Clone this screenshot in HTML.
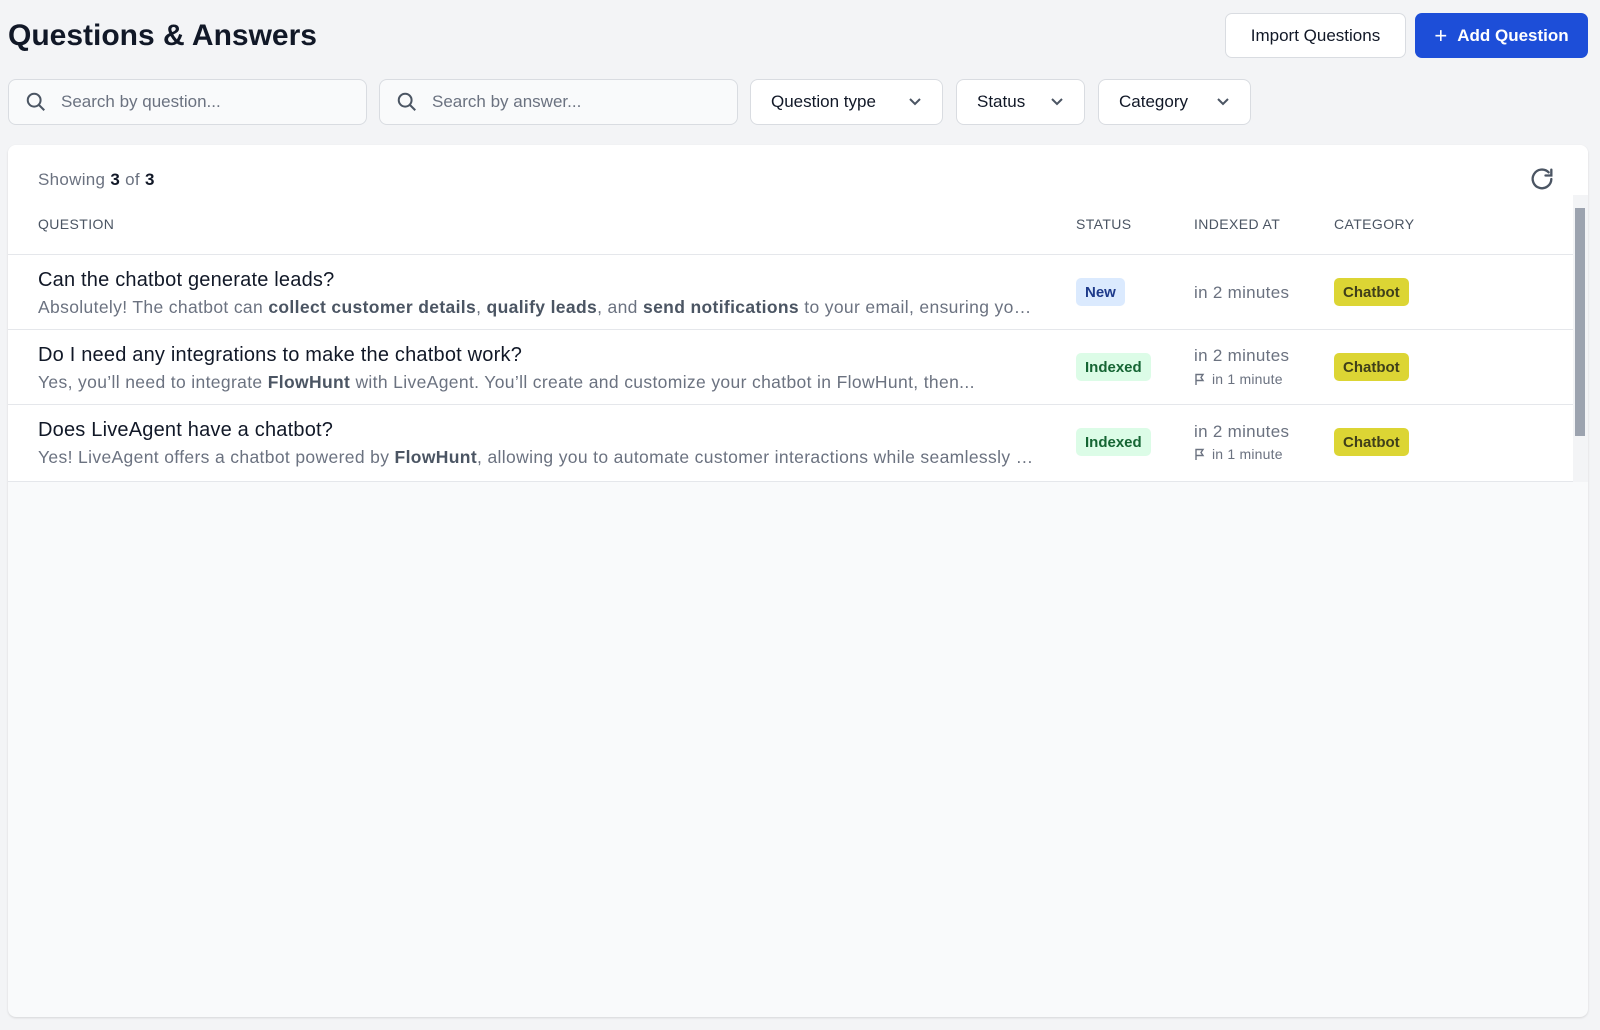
<!DOCTYPE html>
<html><head><meta charset="utf-8"><style>
*{box-sizing:border-box;margin:0;padding:0}
body{width:1600px;height:1030px;background:#f3f4f6;font-family:"Liberation Sans",sans-serif;color:#111827;position:relative;overflow:hidden}
.abs{position:absolute}
h1{position:absolute;left:8px;top:19px;font-size:30px;font-weight:700;color:#111827;letter-spacing:0px}
.btn{position:absolute;top:13px;height:45px;border-radius:7px;font-size:17px;display:flex;align-items:center;justify-content:center}
.inp{position:absolute;top:79px;height:46px;border:1px solid #d9dce1;border-radius:8px;background:#f9fafb;display:flex;align-items:center;font-size:17px;color:#6b7280}
.inp svg{margin:0 14px 0 16px}
.dd{position:absolute;top:79px;height:46px;border:1px solid #d9dce1;border-radius:8px;background:#fff;display:flex;align-items:center;justify-content:space-between;padding:0 20px;font-size:17px;color:#111827}
.card{position:absolute;left:8px;top:145px;width:1580px;height:872px;background:#f9fafb;border-radius:8px;box-shadow:0 1px 2px rgba(0,0,0,.12)}
.top{position:absolute;left:0;top:0;width:1580px;height:337px;background:#fff;border-radius:8px 8px 0 0}
.th{position:absolute;top:71px;font-size:14px;color:#4b5563;letter-spacing:.4px}
.row{position:absolute;left:0;width:1565px;height:75px;border-top:1px solid #e5e7eb}
.q{position:absolute;left:30px;top:14px;font-size:20px;color:#111827;letter-spacing:.2px}
.a{position:absolute;left:30px;top:42px;font-size:17.5px;color:#6b7280;white-space:nowrap;width:1000px;overflow:hidden;text-overflow:ellipsis;letter-spacing:.35px}
.a b{color:#4b5563}
.badge{position:absolute;top:23px;height:28px;border-radius:5px;font-size:15px;font-weight:700;display:flex;align-items:center;padding:0 9px}
.new{background:#dbeafe;color:#1e3a8a;left:1068px}
.idx{background:#dcfce7;color:#166534;left:1068px}
.cat{background:#dcd534;color:#3f3f1a;left:1326px}
.t1{position:absolute;left:1186px;font-size:17px;color:#6b7280;letter-spacing:.3px}
.t2{position:absolute;left:1186px;font-size:14px;color:#6b7280;display:flex;align-items:center;gap:6px;letter-spacing:.2px}
</style></head><body>
<h1>Questions &amp; Answers</h1>
<div class="btn" style="left:1225px;width:181px;background:#fff;border:1px solid #d9dce1;color:#111827">Import Questions</div>
<div class="btn" style="left:1415px;width:173px;background:#1d4ed8;color:#fff;font-weight:700"><span style="font-weight:400;font-size:22px;margin-right:10px">+</span>Add Question</div>
<div class="inp" style="left:8px;width:359px"><svg width="22" height="22" viewBox="0 0 24 24" fill="none" stroke="#4b5563" stroke-width="2.2"><circle cx="10" cy="10" r="7"/><path d="M15 15l6 6"/></svg>Search by question...</div>
<div class="inp" style="left:379px;width:359px"><svg width="22" height="22" viewBox="0 0 24 24" fill="none" stroke="#4b5563" stroke-width="2.2"><circle cx="10" cy="10" r="7"/><path d="M15 15l6 6"/></svg>Search by answer...</div>
<div class="dd" style="left:750px;width:193px">Question type<svg width="14" height="10" viewBox="0 0 14 10"><path d="M2 2l5 5 5-5" fill="none" stroke="#4b5563" stroke-width="2"/></svg></div>
<div class="dd" style="left:956px;width:129px">Status<svg width="14" height="10" viewBox="0 0 14 10"><path d="M2 2l5 5 5-5" fill="none" stroke="#4b5563" stroke-width="2"/></svg></div>
<div class="dd" style="left:1098px;width:153px">Category<svg width="14" height="10" viewBox="0 0 14 10"><path d="M2 2l5 5 5-5" fill="none" stroke="#4b5563" stroke-width="2"/></svg></div>
<div class="card"><div class="top">
<div class="abs" style="left:30px;top:25px;font-size:17px;color:#6b7280;letter-spacing:.3px">Showing <b style="color:#111827">3</b> of <b style="color:#111827">3</b></div>
<svg class="abs" style="left:1520px;top:20px" width="28" height="28" viewBox="0 0 24 24" fill="none" stroke="#4b5563" stroke-width="2" stroke-linecap="round"><path d="M20 12a8 8 0 1 1-2.3-5.7"/><path d="M20 4v5h-5"/></svg>
<div class="th" style="left:30px">QUESTION</div>
<div class="th" style="left:1068px">STATUS</div>
<div class="th" style="left:1186px">INDEXED AT</div>
<div class="th" style="left:1326px">CATEGORY</div>
<div class="row" style="top:109px"><div class="q">Can the chatbot generate leads?</div><div class="a">Absolutely! The chatbot can <b>collect customer details</b>, <b>qualify leads</b>, and <b>send notifications</b> to your email, ensuring you never miss a lead</div><div class="badge new">New</div><div class="t1" style="top:28px">in 2 minutes</div><div class="badge cat">Chatbot</div></div>
<div class="row" style="top:184px"><div class="q">Do I need any integrations to make the chatbot work?</div><div class="a" style="text-overflow:clip">Yes, you’ll need to integrate <b>FlowHunt</b> with LiveAgent. You’ll create and customize your chatbot in FlowHunt, then...</div><div class="badge idx">Indexed</div><div class="t1" style="top:16px">in 2 minutes</div><div class="t2" style="top:41px"><svg width="12" height="13" viewBox="0 0 12 13" fill="none" stroke="#6b7280" stroke-width="1.4"><path d="M2 12V1.5h7l-2 3 2 3H2"/></svg>in 1 minute</div><div class="badge cat">Chatbot</div></div>
<div class="row" style="top:259px"><div class="q">Does LiveAgent have a chatbot?</div><div class="a">Yes! LiveAgent offers a chatbot powered by <b>FlowHunt</b>, allowing you to automate customer interactions while seamlessly handing over</div><div class="badge idx">Indexed</div><div class="t1" style="top:17px">in 2 minutes</div><div class="t2" style="top:41px"><svg width="12" height="13" viewBox="0 0 12 13" fill="none" stroke="#6b7280" stroke-width="1.4"><path d="M2 12V1.5h7l-2 3 2 3H2"/></svg>in 1 minute</div><div class="badge cat">Chatbot</div></div>
<div class="abs" style="left:0;top:336px;width:1565px;border-top:1px solid #e5e7eb"></div>
<div class="abs" style="left:1565px;top:50px;width:15px;height:287px;background:#f3f4f6"></div>
<div class="abs" style="left:1567px;top:63px;width:10px;height:228px;background:#9ca3af"></div>
</div></div>
</body></html>
